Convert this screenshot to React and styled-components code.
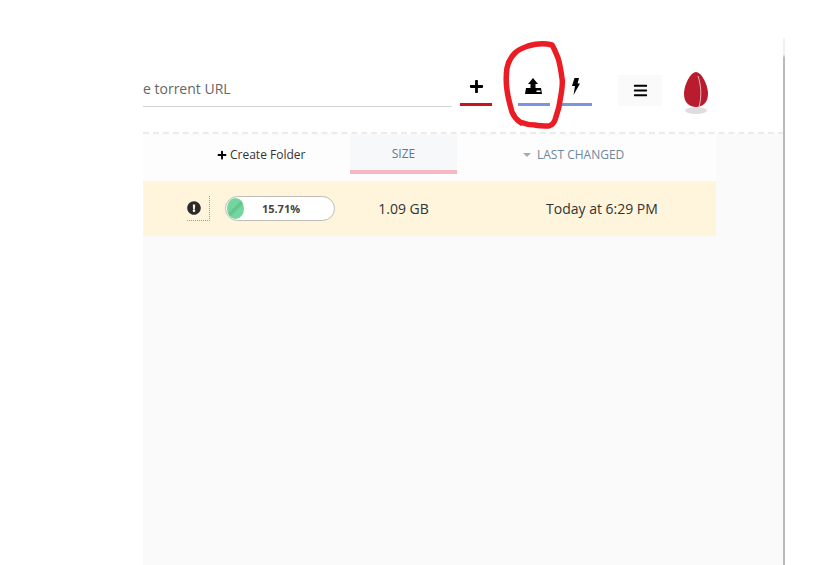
import React from "react";
import styled, { createGlobalStyle } from "styled-components";
import { FaBars, FaExclamationCircle, FaPlus } from "react-icons/fa";

const GlobalStyle = createGlobalStyle`
  html, body {
    margin: 0;
    background: #fff;
    font-family: "Open Sans", "Liberation Sans", sans-serif;
  }
`;

const UploadIcon = () => (
  <svg width="18" height="16" viewBox="0 0 18 16">
    <path d="M8 0 13 6H10.5V10.5H5.5V6H3z" fill="#000" />
    <path d="M1 10H16L17 16H0z" fill="#000" />
    <rect x="11.5" y="12.5" width="4" height="1.5" fill="#fff" />
  </svg>
);

const BoltIcon = () => (
  <svg width="8" height="17" viewBox="0 0 8 17">
    <path d="M2.5 0H7L5.6 5.6H8L1.5 17 3 8H0z" fill="#000" />
  </svg>
);

const SeedLogo = () => (
  <svg width="26" height="44" viewBox="0 0 26 44">
    <ellipse cx="13" cy="40.5" rx="11" ry="3.5" fill="#dedede" />
    <path d="M13 2C8 2 1 14 1 24c0 8 5 13 12 13s12-5 12-13C25 14 18 2 13 2z" fill="#b91c2e" />
    <path d="M15 6c3 9 4 20 1 31" stroke="#eeb4bc" strokeWidth="1" fill="none" />
  </svg>
);

const Scribble = () => (
  <svg width="70" height="92" viewBox="0 0 70 92">
    <path
      d="M52 5C44 3 35 4 28 6 22 8 18 10 15 13 10 18 8 23 7 28 6 35 6 43 7 50 8 58 10 65 12 72 14 77 17 80 20 82 25 84 30 85 35 85 40 86 45 86 49 86 52 85 54 83 55 80 58 72 60 63 61 55 62 49 63 43 62 38 61 31 60 24 58 18 56 13 54 8 52 5z"
      fill="none"
      stroke="#ec1c24"
      strokeWidth="5.5"
      strokeLinejoin="round"
    />
    <path d="M10 66c2 8 6 15 12 19" fill="none" stroke="#ec1c24" strokeWidth="3" />
  </svg>
);

function App() {
  const percent = 15.71;

  return (
    <Page>
      <GlobalStyle />
      <Shell>
        <Header>
          <UrlInput>e torrent URL</UrlInput>
          <ActionButton $accent="#c8141f" $gap={8}>
            <FaPlus size={15} />
          </ActionButton>
          <ActionButton $accent="#7d93de" $gap={26}>
            <UploadIcon />
            <Annotation>
              <Scribble />
            </Annotation>
          </ActionButton>
          <ActionButton $accent="#7d93de" $gap={10}>
            <BoltIcon />
          </ActionButton>
          <MenuButton>
            <FaBars size={15} />
          </MenuButton>
          <Logo>
            <SeedLogo />
          </Logo>
        </Header>

        <Main>
          <HeaderRow>
            <FolderCell>
              <FaPlus size={10} />
              Create Folder
            </FolderCell>
            <SizeHeading>SIZE</SizeHeading>
            <ChangedHeading>
              <SortArrow />
              LAST CHANGED
            </ChangedHeading>
          </HeaderRow>
          <TorrentRow>
            <StatusCell>
              <AlertBox>
                <FaExclamationCircle size={14} />
              </AlertBox>
              <Progress>
                <ProgressFill style={{ width: `${percent}%` }} />
                <ProgressLabel>{percent}%</ProgressLabel>
              </Progress>
            </StatusCell>
            <SizeCell>1.09 GB</SizeCell>
            <ChangedCell>Today at 6:29 PM</ChangedCell>
          </TorrentRow>
        </Main>
      </Shell>
    </Page>
  );
}

const Page = styled.div`
  width: 819px;
  height: 565px;
  overflow: hidden;
  background: #fff;
`;

const Shell = styled.div`
  position: relative;
  display: flex;
  flex-direction: column;
  width: 641px;
  height: 565px;
  margin-left: 143px;
  &::after {
    content: "";
    position: absolute;
    top: 38px;
    bottom: 0;
    right: -1px;
    width: 2px;
    background: linear-gradient(#f1f1f1 0, #f1f1f1 16px, #b9b9b9 20px);
  }
`;

const Header = styled.div`
  display: flex;
  flex: none;
  align-items: flex-end;
  height: 134px;
  padding-bottom: 26px;
  box-sizing: border-box;
  border-bottom: 2px dashed #ebebeb;
`;

const UrlInput = styled.div`
  width: 309px;
  height: 36px;
  box-sizing: border-box;
  margin-bottom: -1px;
  line-height: 36px;
  font-size: 14px;
  color: #666;
  border-bottom: 1px solid #d4d4d4;
`;

const ActionButton = styled.div`
  position: relative;
  display: flex;
  align-items: center;
  justify-content: center;
  width: 32px;
  height: 34px;
  box-sizing: border-box;
  margin-left: ${(p) => p.$gap}px;
  padding-bottom: 3px;
  color: #000;
  border-bottom: 3px solid ${(p) => p.$accent};
`;

const Annotation = styled.div`
  position: absolute;
  z-index: 1;
  top: -32px;
  left: -18px;
  line-height: 0;
`;

const MenuButton = styled.div`
  display: flex;
  align-items: center;
  justify-content: center;
  width: 44px;
  height: 31px;
  margin-left: 26px;
  color: #000;
  background: #fafafa;
`;

const Logo = styled.div`
  width: 26px;
  height: 44px;
  margin: 0 0 -8px 21px;
  line-height: 0;
`;

const Main = styled.div`
  flex: 1;
  padding-top: 1px;
  background: #fafafa;
`;

const HeaderRow = styled.div`
  display: grid;
  grid-template-columns: 207px 107px 259px;
  align-items: start;
  width: 573px;
  height: 46px;
  background: #fdfdfd;
`;

const FolderCell = styled.div`
  display: flex;
  align-items: center;
  gap: 3px;
  height: 39px;
  padding-left: 74px;
  font-size: 12px;
  color: #333;
  svg {
    color: #000;
  }
`;

const SizeHeading = styled.div`
  display: flex;
  align-items: center;
  justify-content: center;
  height: 39px;
  box-sizing: border-box;
  padding-top: 2px;
  font-size: 12px;
  color: #5b7a90;
  background: #f7f8fa;
  border-bottom: 4px solid #f4b8c0;
`;

const ChangedHeading = styled.div`
  display: flex;
  align-items: center;
  gap: 6px;
  height: 39px;
  padding-left: 66px;
  font-size: 12px;
  color: #6f8799;
`;

const SortArrow = styled.span`
  width: 0;
  height: 0;
  margin-top: 1px;
  border-left: 4px solid transparent;
  border-right: 4px solid transparent;
  border-top: 4px solid #a9a9a9;
`;

const TorrentRow = styled.div`
  display: grid;
  grid-template-columns: 207px 107px 259px;
  align-items: center;
  width: 573px;
  height: 55px;
  font-size: 14px;
  color: #333;
  background: #fff4dc;
`;

const StatusCell = styled.div`
  display: flex;
  align-items: center;
  gap: 15px;
  padding-left: 44px;
`;

const AlertBox = styled.div`
  display: flex;
  align-items: center;
  width: 23px;
  height: 25px;
  color: #2b2b2b;
  border-right: 1px dotted #999;
  border-bottom: 1px dotted #999;
  box-sizing: border-box;
`;

const Progress = styled.div`
  position: relative;
  display: flex;
  align-items: center;
  justify-content: center;
  width: 110px;
  height: 25px;
  box-sizing: border-box;
  padding-left: 2px;
  background: #fff;
  border: 1px solid #bdbdb5;
  border-radius: 13px;
`;

const ProgressFill = styled.div`
  position: absolute;
  top: 1px;
  bottom: 1px;
  left: 1px;
  border-radius: 50%;
  background: linear-gradient(135deg, #72d69e 40%, #62c08b 50%, #72d69e 62%);
`;

const ProgressLabel = styled.span`
  font-size: 11px;
  font-weight: 700;
  color: #444;
`;

const SizeCell = styled.div`
  text-align: center;
`;

const ChangedCell = styled.div`
  padding-left: 89px;
`;

export default App;
